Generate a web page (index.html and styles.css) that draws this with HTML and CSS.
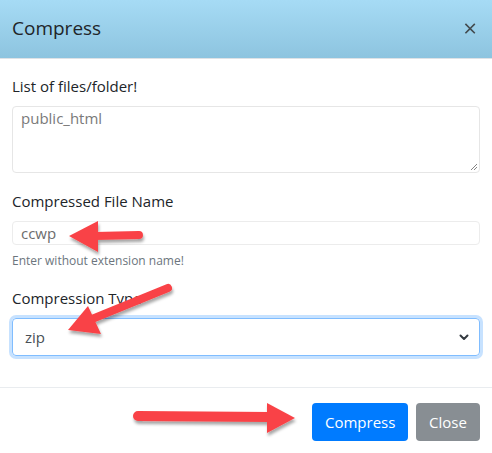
FILE: index.html
```html
<!DOCTYPE html>
<html>
<head>
<meta charset="utf-8">
<link rel="stylesheet" href="styles.css">
</head>
<body>
<div class="modal">
  <div class="modal-header">
    <h5 class="modal-title">Compress</h5>
    <span class="close">&times;</span>
  </div>
  <div class="modal-body">
    <div class="form-group">
      <label class="lbl">List of files/folder!</label>
      <div class="textarea">public_html<span class="grip"><svg width="8" height="8" viewBox="0 0 8 8"><path d="M1 7L7 1M4 7L7 4" stroke="#777" stroke-width="0.9"/></svg></span></div>
    </div>
    <div class="form-group">
      <label class="lbl">Compressed File Name</label>
      <div class="input">ccwp</div>
      <small class="help">Enter without extension name!</small>
    </div>
    <div class="form-group">
      <label class="lbl">Compression Type</label>
      <div class="select"><span>zip</span><svg width="10" height="7" viewBox="0 0 10 7"><path d="M1.5 1.5L5 5L8.5 1.5" fill="none" stroke="#343a40" stroke-width="2" stroke-linecap="round" stroke-linejoin="round"/></svg></div>
    </div>
  </div>
  <div class="modal-footer">
    <button class="btn btn-primary">Compress</button>
    <button class="btn btn-secondary">Close</button>
  </div>
</div>
<svg class="arrows" width="492" height="453" viewBox="0 0 492 453">
  <defs>
    <filter id="sh" x="-20%" y="-20%" width="140%" height="160%">
      <feDropShadow dx="1" dy="3" stdDeviation="1.8" flood-color="#000" flood-opacity="0.35"/>
    </filter>
  </defs>
  <g fill="#f94346" stroke="#f94346" filter="url(#sh)">
    <line x1="139" y1="235" x2="95" y2="236" stroke-width="8" stroke-linecap="round"/>
    <polygon points="69,236 98,221 98,252" stroke="none"/>
    <line x1="168" y1="288" x2="92" y2="319" stroke-width="8" stroke-linecap="round"/>
    <polygon points="68,330 88,306 101,334" stroke="none"/>
    <line x1="138" y1="416" x2="270" y2="417" stroke-width="10" stroke-linecap="round"/>
    <polygon points="295,418 267,403 267,433" stroke="none"/>
  </g>
</svg>
</body>
</html>
```

FILE: styles.css
```css
* { box-sizing: border-box; }
html, body { margin: 0; padding: 0; background: #fff; }
body {
  font-family: "Open Sans", "Noto Sans", sans-serif;
  font-size: 15px;
  color: #212529;
  width: 492px;
  height: 453px;
  position: relative;
  overflow: hidden;
}
.modal { width: 492px; }
.modal-header {
  height: 59px;
  background: linear-gradient(to bottom, #a6dbf5, #8dc4df);
  border-bottom: 1px solid #dee2e6;
  display: flex;
  align-items: center;
  justify-content: space-between;
  padding: 0 15px 0 12px;
}
.modal-title {
  margin: 0;
  font-size: 19px;
  font-weight: 500;
  color: #212529;
  line-height: 1;
  padding-bottom: 2px;
}
.close {
  font-size: 24px;
  font-weight: 400;
  color: #333;
  opacity: 0.85;
  line-height: 1;
  padding-bottom: 3px;
}
.modal-body { padding: 15px 12px 15px 12px; }
.form-group { margin-bottom: 16px; display: flex; flex-direction: column; }
.lbl { display: block; line-height: 24px; margin-bottom: 8px; }
.textarea {
  position: relative;
  height: 67px;
  border: 1px solid #e6e6e6;
  border-radius: 4px;
  padding: 0 8px;
  color: #7a7a7a;
  line-height: 22px;
}
.grip { position: absolute; right: 1px; bottom: 1px; line-height: 0; }
.input {
  height: 24px;
  border: 1px solid #ececec;
  border-radius: 4px;
  padding: 0 8px;
  color: #6c6c6c;
  line-height: 22px;
}
.help {
  display: block;
  margin-top: 6px;
  font-size: 12px;
  line-height: 19px;
  color: #6c757d;
}
.select {
  height: 38px;
  border: 1px solid #80bdff;
  border-radius: 4px;
  box-shadow: 0 0 0 3px rgba(0, 123, 255, 0.22);
  padding: 0 10px 0 12px;
  display: flex;
  align-items: center;
  justify-content: space-between;
  color: #495057;
}
.modal-footer {
  border-top: 1px solid #e9ecef;
  padding: 15px 12px 0 12px;
  display: flex;
  justify-content: flex-end;
  gap: 8px;
}
.btn {
  font-family: inherit;
  font-size: 15px;
  height: 38px;
  border: none;
  border-radius: 4px;
  color: #fff;
  padding: 0 13px;
  line-height: 38px;
}
.btn-primary { background: #007bff; width: 96px; }
.btn-secondary { background: #888e93; width: 64px; }
.arrows { position: absolute; left: 0; top: 0; pointer-events: none; }
```
